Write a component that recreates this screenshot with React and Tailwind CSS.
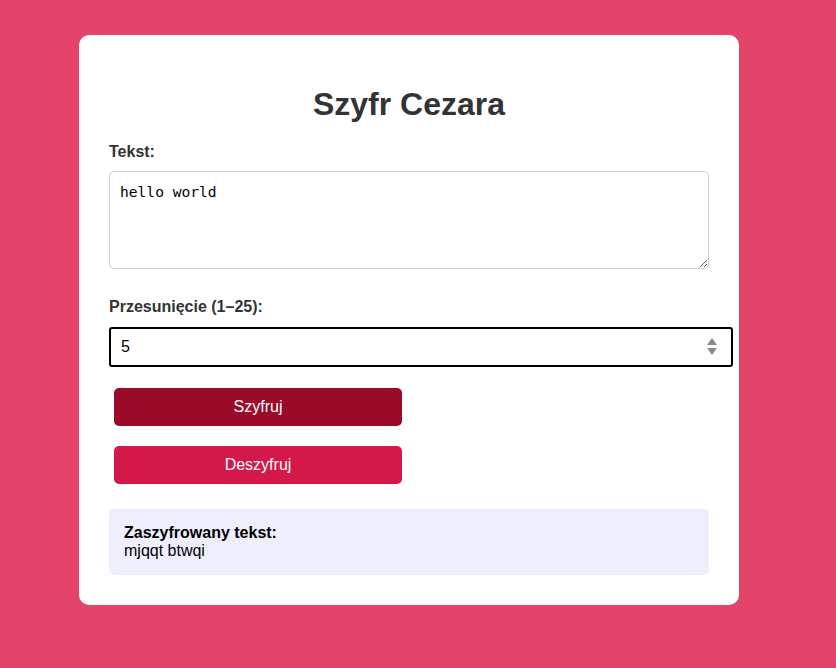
import React from 'react'

const App = () => {
  return (
    <div className="min-h-screen bg-[#e4436a] pt-[35px] pb-[40px] font-['Liberation_Sans',Arial,sans-serif]">
      {/* Card */}
      <div className="w-[660px] ml-[79px] bg-white rounded-[10px] p-[30px]">
        <h1 className="text-[32px] leading-[37px] font-bold text-center text-[#333] mt-[21px] mb-[20px]">
          Szyfr Cezara
        </h1>

        <label className="block text-[16px] leading-[18px] font-bold text-[#333] mb-[10px]">
          Tekst:
        </label>
        <textarea
          readOnly
          defaultValue="hello world"
          className="block w-full h-[98px] border border-[#ccc] rounded-[5px] px-[10px] pt-[11px] pb-[10px] font-['DejaVu_Sans_Mono',monospace] text-[14.6px] leading-[17px] text-black outline-none"
        />

        <label className="block text-[16px] leading-[18px] font-bold text-[#333] mt-[29px] mb-[11px]">
          Przesunięcie (1–25):
        </label>
        <div className="relative w-[624px] h-[40px] border-2 border-black rounded-[3px] flex items-center">
          <input
            readOnly
            type="text"
            defaultValue="5"
            className="w-full h-full px-[10px] text-[16px] text-black bg-transparent outline-none"
          />
          {/* spinner */}
          <svg className="absolute right-[14px] top-[9px]" width="10" height="18" viewBox="0 0 10 18">
            <path d="M5 0 L10 7 L0 7 Z" fill="#8a8a8a" />
            <path d="M0 10 L10 10 L5 17 Z" fill="#8a8a8a" />
          </svg>
        </div>

        {/* Buttons */}
        <div className="flex flex-col gap-[20px] mt-[21px]">
          <button className="ml-[5px] w-[288px] h-[38px] rounded-[5px] bg-[#9b0a28] text-white text-[16px]">
            Szyfruj
          </button>
          <button className="ml-[5px] w-[288px] h-[38px] rounded-[5px] bg-[#d4184a] text-white text-[16px]">
            Deszyfruj
          </button>
        </div>

        {/* Result */}
        <div className="mt-[25px] bg-[#eeeefc] rounded-[5px] p-[15px] text-[16px] leading-[18px] text-black">
          <strong>Zaszyfrowany tekst:</strong>
          <br />
          mjqqt btwqi
        </div>
      </div>
    </div>
  )
}

export default App
